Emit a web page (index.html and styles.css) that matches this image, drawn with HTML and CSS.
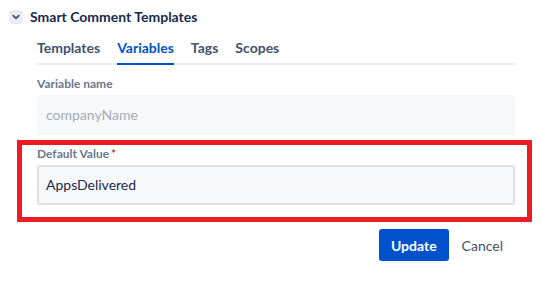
FILE: index.html
```
<!DOCTYPE html>
<html lang="en">
<head>
    <meta charset="UTF-8">
    <title>Smart Comment Templates</title>
    <link rel="stylesheet" href="styles.css">
</head>
<body>
    <div class="section-head">
        <span class="toggle">
            <svg width="14" height="14" viewBox="0 0 14 14"><path d="M4.2 5.6 L7 8.4 L9.8 5.6" fill="none" stroke="#42526e" stroke-width="1.8" stroke-linecap="round" stroke-linejoin="round"/></svg>
        </span>
        <span class="section-title">Smart Comment Templates</span>
    </div>

    <div class="content">
        <div class="tabs">
            <div class="tab">Templates</div>
            <div class="tab active">Variables</div>
            <div class="tab">Tags</div>
            <div class="tab">Scopes</div>
        </div>

        <div class="field">
            <label class="field-label">Variable name</label>
            <div class="input disabled">companyName</div>
        </div>
    </div>

    <!-- highlighted field -->
    <div class="highlight">
        <div class="field">
            <label class="field-label">Default Value<span class="req">*</span></label>
            <div class="input">AppsDelivered</div>
        </div>
    </div>

    <div class="content">
        <div class="actions">
            <button class="btn primary">Update</button>
            <button class="btn subtle">Cancel</button>
        </div>
    </div>
</body>
</html>
```

FILE: styles.css
```
body {
    margin: 0;
    background: #fff;
    font-family: Lato, "Noto Sans", sans-serif;
    color: #172b4d;
}
.section-head {
    display: flex;
    align-items: center;
    padding: 10px 0 0 9px;
    height: 14px;
}
.toggle {
    width: 14px;
    height: 14px;
    background: #ebecf0;
    border-radius: 3px;
    display: flex;
}
.section-title {
    margin-left: 7px;
    font-size: 14px;
    font-weight: 700;
    line-height: 14px;
}
.content {
    margin-left: 37px;
    width: 478px;
}
.tabs {
    display: flex;
    gap: 17px;
    margin-top: 14px;
    box-shadow: inset 0 -2px 0 #ebecf0;
}
.tab {
    font-size: 14px;
    font-weight: 700;
    line-height: 20px;
    padding-bottom: 5px;
    color: #42526e;
    border-bottom: 2px solid transparent;
}
.tab.active {
    color: #0052cc;
    border-bottom-color: #0052cc;
}
.field {
    padding-top: 11px;
}
.field-label {
    display: block;
    font-size: 12px;
    font-weight: 700;
    line-height: 16px;
    color: #6b778c;
    margin-bottom: 3px;
}
.req {
    color: #de350b;
    margin-left: 2px;
}
.input {
    box-sizing: border-box;
    height: 40px;
    padding: 0 7px;
    border: 2px solid #dfe1e6;
    border-radius: 3px;
    background: #f7f8f9;
    font-size: 14px;
    line-height: 36px;
    color: #172b4d;
}
.input.disabled {
    border-color: #f7f8f9;
    color: #a5adba;
}
.highlight {
    margin: 5px 0 0 17px;
    width: 515px;
    box-sizing: border-box;
    border: 5px solid #ed1c24;
    padding: 0 12px 12px 15px;
}
.highlight .field {
    padding-top: 1px;
}
.actions {
    display: flex;
    justify-content: flex-end;
    gap: 1px;
    margin-top: 7px;
}
.btn {
    font-family: inherit;
    font-size: 14px;
    height: 32px;
    padding: 0 12px;
    border: none;
    border-radius: 3px;
    background: none;
}
.btn.primary {
    background: #0052cc;
    color: #fff;
    font-weight: 700;
}
.btn.subtle {
    color: #42526e;
}
```
